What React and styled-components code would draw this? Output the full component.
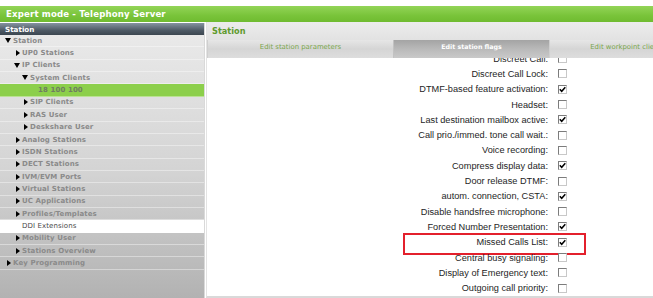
import React, { useLayoutEffect, useRef } from "react";
import styled, { createGlobalStyle } from "styled-components";

const Global = createGlobalStyle`
  html, body { margin: 0; padding: 0; background: #fff; }
  body { font-family: "DejaVu Sans", Verdana, sans-serif; }
  * { box-sizing: border-box; }
`;

const Page = styled.div`
  width: 653px;
  height: 298px;
  padding-top: 6px;
  display: flex;
  flex-direction: column;
  overflow: hidden;
  background: #fff;
`;

const TitleBar = styled.div`
  height: 16px;
  flex: none;
  background: linear-gradient(#93d457, #79c43a 60%, #6fbb30);
  color: #fff;
  font-weight: bold;
  font-size: 8.6px;
  letter-spacing: 0.15px;
  padding-left: 6px;
  display: flex;
  align-items: center;
`;

const Body = styled.div`
  flex: 1;
  display: flex;
  min-height: 0;
`;

const Sidebar = styled.nav`
  width: 206px;
  flex: none;
  display: flex;
  flex-direction: column;
  padding-top: 1px;
  background: #fff;
`;

const SideInner = styled.div`
  flex: 1;
  display: flex;
  flex-direction: column;
  width: 205px;
  border-right: 1px solid #d9d9d9;
  background: linear-gradient(#ebebeb, #d3d3d3 55%, #b2b2b2);
`;

const SideHeader = styled.div`
  height: 12px;
  flex: none;
  background: linear-gradient(#8593a0, #4f5b66 60%, #3c4650);
  color: #fff;
  font-weight: bold;
  font-size: 7.2px;
  padding-left: 5px;
  display: flex;
  align-items: center;
`;

const TreeRow = styled.div`
  height: 12.37px;
  flex: none;
  display: flex;
  align-items: center;
  padding-left: ${(p) => p.$indent}px;
  border-bottom: 1px solid rgba(255, 255, 255, 0.4);
  font-size: 7px;
  letter-spacing: 0.1px;
  font-weight: ${(p) => (p.$variant === "plain" ? "normal" : "bold")};
  color: ${(p) =>
    p.$variant === "selected" ? "#6f7d62" : p.$variant === "plain" ? "#4a4a4a" : "#8a8a8a"};
  background: ${(p) =>
    p.$variant === "selected" ? "#8ccf4b" : p.$variant === "plain" ? "#fff" : "transparent"};
  white-space: nowrap;
`;

const Toggle = styled.span`
  width: 8px;
  flex: none;
  display: flex;
  justify-content: ${(p) => (p.$open ? "flex-start" : "center")};
  align-items: center;
`;

const Arrow = styled.span`
  width: 0;
  height: 0;
  ${(p) =>
    p.$open
      ? `border-left: 3.5px solid transparent; border-right: 3.5px solid transparent; border-top: 5px solid #000;`
      : `border-top: 3.5px solid transparent; border-bottom: 3.5px solid transparent; border-left: 4.5px solid #000;`}
`;

const Main = styled.main`
  flex: 1;
  display: flex;
  flex-direction: column;
  border-left: 1px solid #e3e3e3;
  border-bottom: 2px solid #d9d9d9;
  min-width: 0;
  overflow: hidden;
`;

const MainHeader = styled.div`
  height: 18px;
  flex: none;
  background: linear-gradient(#ececec, #e2e2e2);
  color: #5f9a2d;
  font-weight: bold;
  font-size: 8.2px;
  padding-left: 5px;
  display: flex;
  align-items: center;
`;

const Tabs = styled.div`
  height: 18px;
  flex: none;
  display: flex;
  background: #e2e2e2;
`;

const Tab = styled.div`
  width: ${(p) => p.$w}px;
  flex: none;
  display: flex;
  justify-content: center;
  padding-top: 3px;
  font-size: ${(p) => (p.$active ? "6.3px" : "6.9px")};
  white-space: nowrap;
  border-left: 1px solid ${(p) => (p.$active ? "#c2c2c2" : "#cfcfcf")};
  font-weight: ${(p) => (p.$active ? "bold" : "normal")};
  color: ${(p) => (p.$active ? "#fff" : "#7aa64c")};
  background: ${(p) =>
    p.$active
      ? "linear-gradient(#a4a4a4, #b9b9b9 50%, #c9c9c9)"
      : "linear-gradient(#e6e6e6, #d5d5d5 50%, #dddddd)"};
`;

const Content = styled.div`
  flex: 1;
  overflow: hidden;
  background: #fff;
`;

const FlagRow = styled.div`
  position: relative;
  height: 15.31px;
  display: grid;
  grid-template-columns: 341px 9px;
  column-gap: 10px;
  align-items: center;
  ${(p) =>
    p.$highlight &&
    `&::after {
      content: "";
      position: absolute;
      left: 196px;
      top: -1.5px;
      width: 179px;
      height: 18px;
      border: 2px solid #e3202c;
    }`}
`;

const Label = styled.span`
  text-align: right;
  font-family: "Liberation Sans", Arial, sans-serif;
  font-size: 9.2px;
  color: #1e1e1e;
  white-space: nowrap;
`;

const Box = styled.span`
  width: 9px;
  height: 9px;
  border-top: 1px solid #7c7c7c;
  border-left: 1px solid #7c7c7c;
  border-right: 1px solid #c8c8c8;
  border-bottom: 1px solid #c8c8c8;
  background: #fff;
  display: flex;
  align-items: center;
  justify-content: center;
`;

const tree = [
  { label: "Station", level: 0, toggle: "open" },
  { label: "UP0 Stations", level: 1, toggle: "closed" },
  { label: "IP Clients", level: 1, toggle: "open" },
  { label: "System Clients", level: 2, toggle: "open" },
  { label: "18 100 100", level: 3, variant: "selected" },
  { label: "SIP Clients", level: 2, toggle: "closed" },
  { label: "RAS User", level: 2, toggle: "closed" },
  { label: "Deskshare User", level: 2, toggle: "closed" },
  { label: "Analog Stations", level: 1, toggle: "closed" },
  { label: "ISDN Stations", level: 1, toggle: "closed" },
  { label: "DECT Stations", level: 1, toggle: "closed" },
  { label: "IVM/EVM Ports", level: 1, toggle: "closed" },
  { label: "Virtual Stations", level: 1, toggle: "closed" },
  { label: "UC Applications", level: 1, toggle: "closed" },
  { label: "Profiles/Templates", level: 1, toggle: "closed" },
  { label: "DDI Extensions", level: 1, variant: "plain" },
  { label: "Mobility User", level: 1, toggle: "closed" },
  { label: "Stations Overview", level: 1, toggle: "closed" },
  { label: "Key Programming", level: 0, toggle: "closed" },
];

const indents = [5, 14, 22, 30];

const flags = [
  ["Discreet Call", false],
  ["Discreet Call Lock", false],
  ["DTMF-based feature activation", true],
  ["Headset", false],
  ["Last destination mailbox active", true],
  ["Call prio./immed. tone call wait.", false],
  ["Voice recording", false],
  ["Compress display data", true],
  ["Door release DTMF", false],
  ["autom. connection, CSTA", true],
  ["Disable handsfree microphone", false],
  ["Forced Number Presentation", true],
  ["Missed Calls List", true, true],
  ["Central busy signaling", false],
  ["Display of Emergency text", false],
  ["Outgoing call priority", false],
];

const Check = () => (
  <svg width="7" height="7" viewBox="0 0 7 7">
    <path d="M0.8 3.2 L2.7 5.3 L6.3 1.2" fill="none" stroke="#000" strokeWidth="1.5" />
  </svg>
);

export default function App() {
  const ref = useRef(null);
  useLayoutEffect(() => {
    if (ref.current) ref.current.scrollTop = 7;
  }, []);
  return (
    <>
      <Global />
      <Page>
        <TitleBar>Expert mode - Telephony Server</TitleBar>
        <Body>
          <Sidebar>
            <SideInner>
              <SideHeader>Station</SideHeader>
              {tree.map((t) => (
                <TreeRow key={t.label} $indent={t.toggle ? indents[t.level] : indents[t.level] + 8} $variant={t.variant}>
                  {t.toggle && (
                    <Toggle $open={t.toggle === "open"}>
                      <Arrow $open={t.toggle === "open"} />
                    </Toggle>
                  )}
                  {t.label}
                </TreeRow>
              ))}
            </SideInner>
          </Sidebar>
          <Main>
            <MainHeader>Station</MainHeader>
            <Tabs>
              <Tab $w={186}>Edit station parameters</Tab>
              <Tab $w={156} $active>Edit station flags</Tab>
              <Tab $w={156}>Edit workpoint clients</Tab>
            </Tabs>
            <Content ref={ref}>
              {flags.map(([label, checked, hl]) => (
                <FlagRow key={label} $highlight={hl}>
                  <Label>{label}:</Label>
                  <Box>{checked && <Check />}</Box>
                </FlagRow>
              ))}
            </Content>
          </Main>
        </Body>
      </Page>
    </>
  );
}
